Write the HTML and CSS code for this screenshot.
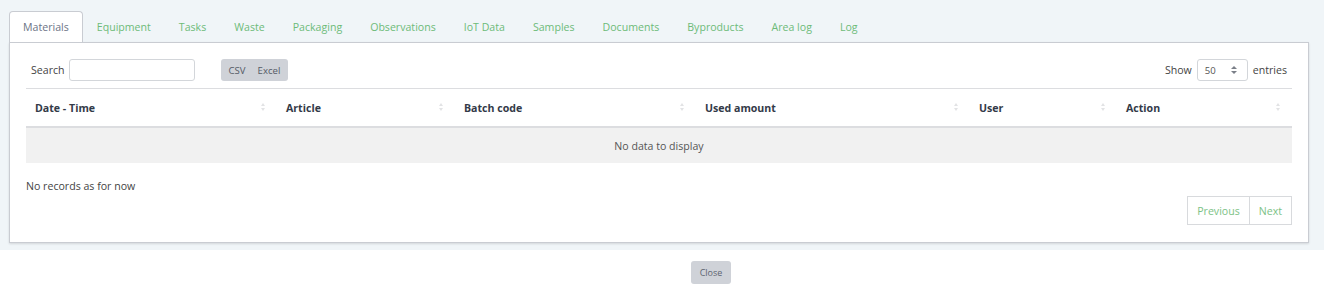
FILE: index.html
```html
<!DOCTYPE html>
<html lang="en">
<head>
  <meta charset="UTF-8">
  <title>Materials</title>
  <link rel="stylesheet" href="styles.css">
</head>
<body>
  <div class="modal-body">
    <ul class="tabs">
      <li class="tab active">Materials</li>
      <li class="tab">Equipment</li>
      <li class="tab">Tasks</li>
      <li class="tab">Waste</li>
      <li class="tab">Packaging</li>
      <li class="tab">Observations</li>
      <li class="tab">IoT Data</li>
      <li class="tab">Samples</li>
      <li class="tab">Documents</li>
      <li class="tab">Byproducts</li>
      <li class="tab">Area log</li>
      <li class="tab">Log</li>
    </ul>

    <div class="panel">
      <div class="toolbar">
        <div class="search">
          <label for="search">Search</label>
          <input type="text" id="search">
          <div class="btn-group">
            <button>CSV</button>
            <button>Excel</button>
          </div>
        </div>
        <div class="length">
          Show
          <div class="select">50 <span class="caret"></span></div>
          entries
        </div>
      </div>

      <table>
        <thead>
          <tr>
            <th class="c1">Date - Time<span class="sort"></span></th>
            <th class="c2">Article<span class="sort"></span></th>
            <th class="c3">Batch code<span class="sort"></span></th>
            <th class="c4">Used amount<span class="sort"></span></th>
            <th class="c5">User<span class="sort"></span></th>
            <th class="c6">Action<span class="sort"></span></th>
          </tr>
        </thead>
        <tbody>
          <tr class="empty">
            <td colspan="6">No data to display</td>
          </tr>
        </tbody>
      </table>

      <div class="info">No records as for now</div>

      <div class="pager">
        <button>Previous</button>
        <button>Next</button>
      </div>
    </div>
  </div>

  <div class="modal-footer">
    <button class="close-btn">Close</button>
  </div>
</body>
</html>
```

FILE: styles.css
```css
body {
  margin: 0;
  background: white;
  font-family: "Open Sans", "Noto Sans", sans-serif;
  font-size: 10.6px;
  color: #444;
}
.modal-body {
  background: #f0f5f8;
  padding: 11px 15px 7px 9px;
}
.tabs {
  display: flex;
  list-style: none;
  margin: 0;
  padding: 0;
}
.tab {
  height: 30px;
  line-height: 30px;
  padding: 0 13px;
  color: #6dbb78;
  border: 1px solid transparent;
  border-bottom: none;
  border-radius: 4px 4px 0 0;
}
.tab.active {
  background: white;
  color: #6c7486;
  border-color: #c9ccd2;
  margin-bottom: -1px;
  position: relative;
}
.panel {
  background: white;
  border: 1px solid #c9ccd2;
  box-shadow: 0 1px 2px rgba(0,0,0,0.12);
  padding: 16px 16px 17px;
}
.toolbar {
  display: flex;
  justify-content: space-between;
  align-items: center;
  height: 22px;
  margin-bottom: 7px;
}
.search {
  display: flex;
  align-items: center;
}
.search label {
  margin-left: 5px;
  margin-right: 4px;
  color: #444;
}
.search input {
  width: 126px;
  height: 22px;
  box-sizing: border-box;
  border: 1px solid #d3d6da;
  border-radius: 3px;
  padding: 0 4px;
  margin: 0;
}
.btn-group {
  display: flex;
  margin-left: 26px;
  background: #cfd2d8;
  border-radius: 3px;
  height: 22px;
  padding: 0 2px;
}
.btn-group button {
  background: none;
  border: none;
  font: inherit;
  font-size: 9.6px;
  color: #555b66;
  padding: 0 6px;
}
.length {
  display: flex;
  align-items: center;
  gap: 5px;
  margin-right: 5px;
  color: #444;
}
.select {
  width: 51px;
  height: 22px;
  box-sizing: border-box;
  border: 1px solid #d3d6da;
  border-radius: 3px;
  padding: 0 0 0 7px;
  display: flex;
  align-items: center;
  font-size: 9.6px;
  color: #555;
  position: relative;
}
.caret {
  position: absolute;
  right: 10px;
  top: 6px;
  width: 0;
  height: 0;
  border-left: 3px solid transparent;
  border-right: 3px solid transparent;
  border-bottom: 3px solid #7a7f88;
}
.caret::after {
  content: "";
  position: absolute;
  left: -3px;
  top: 5px;
  border-left: 3px solid transparent;
  border-right: 3px solid transparent;
  border-top: 3px solid #7a7f88;
}
table {
  width: 100%;
  border-collapse: collapse;
  table-layout: fixed;
  border-top: 1px solid #dcdde0;
}
th {
  text-align: left;
  font-weight: 700;
  color: #333a48;
  height: 37px;
  padding: 0 0 0 9px;
  border-bottom: 2px solid #dcdde0;
  position: relative;
}
.c1 { width: 242px; }
.c2 { width: 169px; }
.c3 { width: 232px; }
.c4 { width: 265px; }
.c5 { width: 138px; }
.sort {
  position: absolute;
  right: 12px;
  top: 14px;
  width: 0;
  height: 0;
  border-left: 2px solid transparent;
  border-right: 2px solid transparent;
  border-bottom: 3px solid #e2e3e5;
}
.sort::after {
  content: "";
  position: absolute;
  left: -2px;
  top: 5px;
  border-left: 2px solid transparent;
  border-right: 2px solid transparent;
  border-top: 3px solid #e2e3e5;
}
.empty td {
  background: #f1f1f1;
  text-align: center;
  height: 35px;
  padding: 0;
  color: #555;
}
.info {
  margin-top: 16px;
  color: #444;
}
.pager {
  display: flex;
  justify-content: flex-end;
  margin-top: 3px;
}
.pager button {
  background: white;
  border: 1px solid #d8dadd;
  font: inherit;
  color: #7cc286;
  height: 29px;
  padding: 0 9px;
  margin-left: -1px;
}
.modal-footer {
  display: flex;
  justify-content: center;
  padding: 11px 0 0 98px;
}
.close-btn {
  background: #cfd2d8;
  border: none;
  border-radius: 3px;
  font: inherit;
  font-size: 9px;
  color: #5d6470;
  width: 40px;
  height: 23px;
}
```
